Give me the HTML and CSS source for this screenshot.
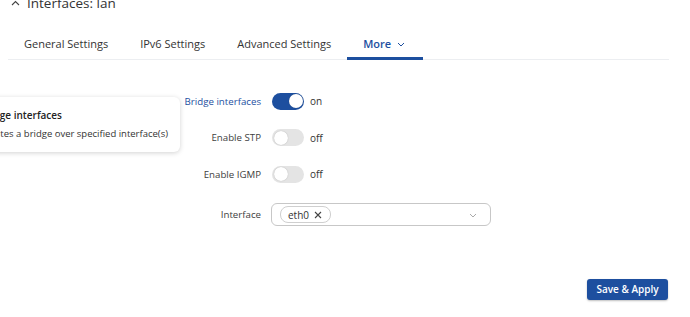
FILE: index.html
```html
<!DOCTYPE html>
<html>
<head>
<link rel="stylesheet" href="styles.css">
</head>
<body>
<div class="page">
	<div class="title">
		<svg class="caret" width="9" height="6" viewBox="0 0 9 6"><path d="M1 5 L4.5 1.5 L8 5" fill="none" stroke="#444" stroke-width="1.1"/></svg>
		<span class="title-text">Interfaces: lan</span>
	</div>

	<div class="tabs">
		<div class="tab">General Settings</div>
		<div class="tab">IPv6 Settings</div>
		<div class="tab">Advanced Settings</div>
		<div class="tab active">More <svg class="chev" width="8" height="5" viewBox="0 0 8 5"><path d="M1 1 L4 4 L7 1" fill="none" stroke="#1d4f9f" stroke-width="1"/></svg></div>
	</div>

	<div class="form">
		<div class="row">
			<label class="label hl">Bridge interfaces</label>
			<div class="control">
				<span class="switch on"><span class="knob"></span></span>
				<span class="state">on</span>
			</div>
			<div class="tip">
				<div class="tip-title">Bridge interfaces</div>
				<div class="tip-text">Creates a bridge over specified interface(s)</div>
			</div>
		</div>
		<div class="row">
			<label class="label">Enable STP</label>
			<div class="control">
				<span class="switch"><span class="knob"></span></span>
				<span class="state">off</span>
			</div>
		</div>
		<div class="row">
			<label class="label">Enable IGMP</label>
			<div class="control">
				<span class="switch"><span class="knob"></span></span>
				<span class="state">off</span>
			</div>
		</div>
		<div class="row row-select">
			<label class="label">Interface</label>
			<div class="select">
				<span class="chip">eth0 <svg class="x" width="8" height="8" viewBox="0 0 8 8"><path d="M1 1 L7 7 M7 1 L1 7" stroke="#444" stroke-width="1.1"/></svg></span>
				<svg class="select-chev" width="8" height="5" viewBox="0 0 8 5"><path d="M1 1 L4 4 L7 1" fill="none" stroke="#aaa" stroke-width="1"/></svg>
			</div>
		</div>
	</div>

	<div class="actions">
		<button class="btn">Save &amp; Apply</button>
	</div>
</div>
</body>
</html>
```

FILE: styles.css
```css
body {
	margin: 0;
	background: #fff;
	font-family: "Open Sans", "Noto Sans", sans-serif;
	color: #333;
	overflow: hidden;
}

.page {
	width: 690px;
	height: 317px;
	position: relative;
}

.title {
	display: flex;
	align-items: center;
	height: 16px;
	margin-top: -5px;
	padding-left: 11px;
}
.caret {
	margin: 0 7px 0 0;
}
.title-text {
	font-size: 13.5px;
	line-height: 16px;
	color: #333;
}

.tabs {
	display: flex;
	align-items: flex-start;
	margin: 20px 21px 0 8px;
	border-bottom: 1px solid #eceef1;
	height: 28px;
}
.tab {
	padding: 0 16px;
	font-size: 11px;
	line-height: 26px;
	height: 26px;
	color: #333;
	border-bottom: 3px solid transparent;
	white-space: nowrap;
}
.tab.active {
	color: #1d4f9f;
	font-weight: 600;
	border-bottom-color: #1d4f9f;
	padding-right: 18px;
}
.chev {
	margin: 0 0 1px 3px;
}

.form {
	margin-top: 23px;
}
.row {
	display: flex;
	align-items: center;
	height: 36.5px;
	position: relative;
}
.row-select {
	height: 44px;
}
.label {
	width: 261px;
	text-align: right;
	font-size: 9.7px;
	color: #404040;
	padding-right: 11px;
}
.label.hl {
	color: #1d4f9f;
}
.control {
	display: flex;
	align-items: center;
}
.switch {
	width: 32px;
	height: 17px;
	border-radius: 9px;
	background: #e4e4e4;
	position: relative;
	display: inline-block;
}
.switch .knob {
	position: absolute;
	top: 1.5px;
	left: 1.5px;
	width: 14px;
	height: 14px;
	border-radius: 50%;
	background: #fff;
	box-shadow: 0 0 1px rgba(0,0,0,.3);
}
.switch.on {
	background: #1d4f9f;
}
.switch.on .knob {
	left: 16.5px;
}
.state {
	font-size: 10px;
	color: #333;
	margin-left: 6px;
}

.select {
	width: 220px;
	height: 23px;
	box-sizing: border-box;
	margin-left: -1px;
	border: 1px solid #c7c7c7;
	border-radius: 6px;
	display: flex;
	align-items: center;
	padding-left: 8px;
	position: relative;
}
.chip {
	display: flex;
	align-items: center;
	font-size: 10px;
	border: 1px solid #cfcfcf;
	border-radius: 8px;
	padding: 0 8px 0 7px;
	height: 15px;
	color: #333;
}
.chip .x {
	margin-left: 5px;
}
.select-chev {
	position: absolute;
	right: 13px;
	top: 9px;
}

.tip {
	position: absolute;
	right: 510px;
	top: 14px;
	white-space: nowrap;
	box-sizing: border-box;
	padding: 10px 12px 10px 14px;
	background: #fff;
	border-radius: 6px;
	box-shadow: 0 1px 5px rgba(0,0,0,.18);
	line-height: 16px;
}
.tip-title {
	font-size: 10px;
	font-weight: 600;
	color: #222;
	margin-bottom: 3px;
}
.tip-text {
	font-size: 9.5px;
	color: #333;
}

.actions {
	display: flex;
	justify-content: flex-end;
	padding-right: 22px;
	margin-top: 42px;
}
.btn {
	background: #1d4f9f;
	color: #fff;
	border: 0;
	border-radius: 3px;
	font-family: inherit;
	font-size: 10px;
	font-weight: 600;
	width: 81px;
	height: 21px;
	padding: 0;
	box-shadow: 0 1px 2px rgba(0,0,0,.25);
}
```
